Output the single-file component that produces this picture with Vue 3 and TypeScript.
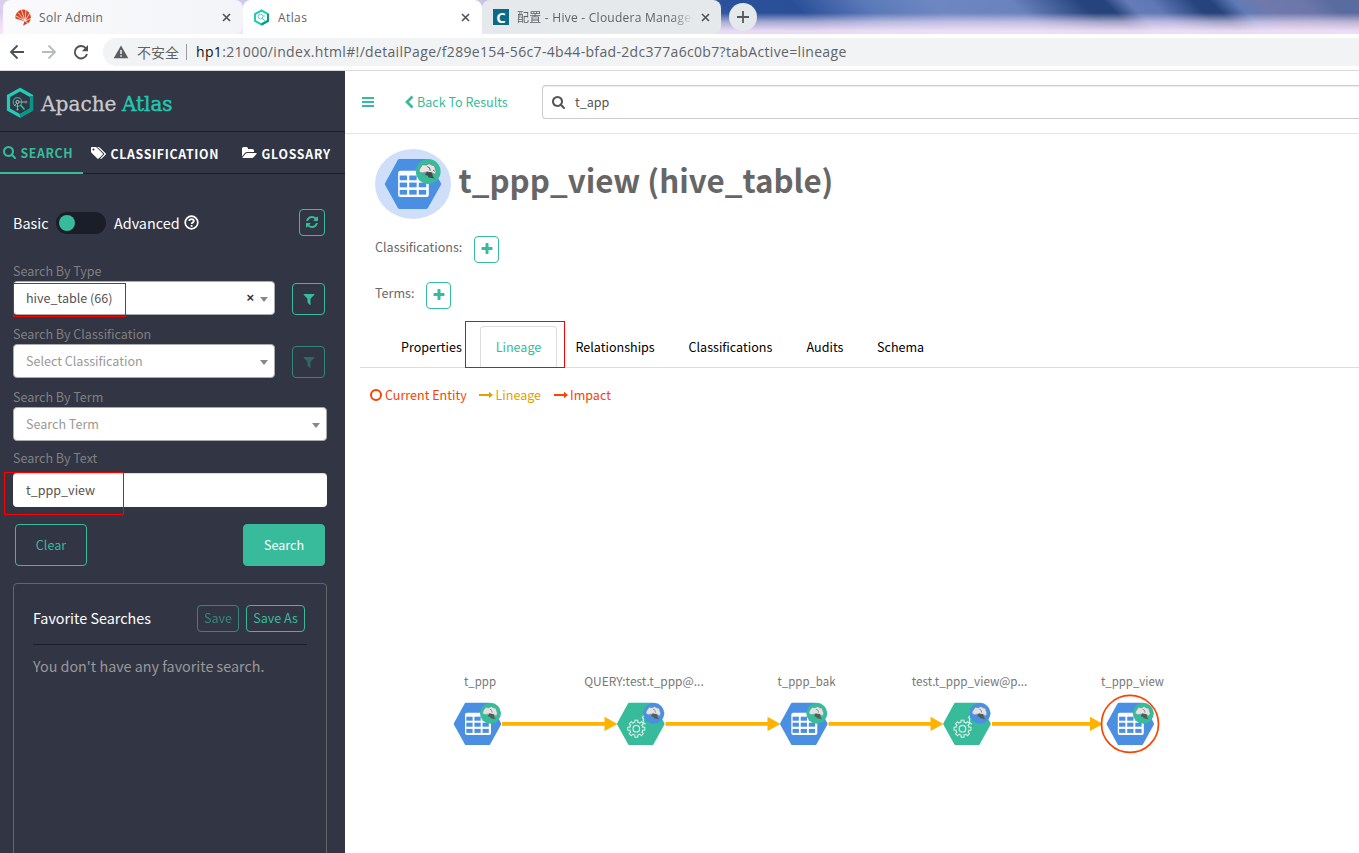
<script setup lang="ts">
interface LineageNode {
  label: string
  kind: 'table' | 'process'
  x: number
  center: number
  width: number
}

const paths = {
  search: 'M1152 832q0-185-131.5-316.5t-316.5-131.5-316.5 131.5-131.5 316.5 131.5 316.5 316.5 131.5 316.5-131.5 131.5-316.5zm512 832q0 52-38 90t-90 38q-54 0-90-38l-343-342q-179 124-399 124-143 0-273.5-55.5t-225-150-150-225-55.5-273.5 55.5-273.5 150-225 225-150 273.5-55.5 273.5 55.5 225 150 150 225 55.5 273.5q0 220-124 399l343 343q37 37 37 90z',
  refresh: 'M1639 1056q0 5-1 7-64 268-268 434.5t-478 166.5q-146 0-282.5-55t-243.5-157l-129 129q-19 19-45 19t-45-19-19-45v-448q0-26 19-45t45-19h448q26 0 45 19t19 45-19 45l-137 137q71 66 161 102t187 36q134 0 250-65t186-179q11-17 53-117 8-23 30-23h192q13 0 22.5 9.5t9.5 22.5zm25-800v448q0 26-19 45t-45 19h-448q-26 0-45-19t-19-45 19-45l138-138q-148-137-349-137-134 0-250 65t-186 179q-11 17-53 117-8 23-30 23h-199q-13 0-22.5-9.5t-9.5-22.5v-7q65-268 270-434.5t480-166.5q146 0 284 55.5t245 156.5l130-129q19-19 45-19t45 19 19 45z',
  filter: 'M1595 295q17 41-14 70l-493 493v742q0 42-39 59-13 5-25 5-27 0-45-19l-256-256q-19-19-19-45v-486l-493-493q-31-29-14-70 17-39 59-39h1280q42 0 59 39z',
  plus: 'M1600 736v192q0 40-28 68t-68 28h-416v416q0 40-28 68t-68 28h-192q-40 0-68-28t-28-68v-416h-416q-40 0-68-28t-28-68v-192q0-40 28-68t68-28h416v-416q0-40 28-68t68-28h192q40 0 68 28t28 68v416h416q40 0 68 28t28 68z',
  tags: 'M384 448q0-53-37.5-90.5t-90.5-37.5-90.5 37.5-37.5 90.5 37.5 90.5 90.5 37.5 90.5-37.5 37.5-90.5zm1067 576q0 53-37 90l-491 492q-39 37-91 37-53 0-90-37l-715-716q-38-37-64.5-101t-26.5-117v-416q0-52 38-90t90-38h416q53 0 117 26.5t102 64.5l715 714q37 39 37 91zm384 0q0 53-37 90l-491 492q-39 37-91 37-36 0-59-14t-53-45l470-470q37-37 37-90 0-52-37-91l-715-714q-38-38-102-64.5t-117-26.5h224q53 0 117 26.5t102 64.5l715 714q37 39 37 91z',
  folder: 'M1879 952q0 31-31 66l-336 396q-43 51-120.5 86.5t-143.5 35.5h-1088q-34 0-60.5-13t-26.5-43q0-31 31-66l336-396q43-51 120.5-86.5t143.5-35.5h1088q34 0 60.5 13t26.5 43zm-343-344v160h-832q-94 0-197 47.5t-164 119.5l-337 396-5 6q0-4-.5-12.5t-.5-12.5v-960q0-92 66-158t158-66h320q92 0 158 66t66 158v32h544q92 0 158 66t66 158z',
}

const nodes: LineageNode[] = [
  { label: 't_ppp', kind: 'table', x: 453.7, center: 480, width: 32 },
  { label: 'QUERY:test.t_ppp@...', kind: 'process', x: 617, center: 644, width: 119.5 },
  { label: 't_ppp_bak', kind: 'table', x: 780, center: 806.5, width: 58 },
  { label: 'test.t_ppp_view@p...', kind: 'process', x: 943.2, center: 969.5, width: 115.5 },
  { label: 't_ppp_view', kind: 'table', x: 1106.5, center: 1132.5, width: 63 },
]

const edges = [
  { from: 502, tip: 617.5 },
  { from: 665.5, tip: 780.5 },
  { from: 828.5, tip: 943.5 },
  { from: 992, tip: 1103 },
]

const rows = [14, 20, 26.2]
const cols = [12.6, 20.7, 28.8]
const teeth = [0, 45, 90, 135, 180, 225, 270, 315]

const entityTabs = [
  { name: 'Properties', cls: 't-prop' },
  { name: 'Lineage', cls: 't-lin' },
  { name: 'Relationships', cls: 't-rel' },
  { name: 'Classifications', cls: 't-cls' },
  { name: 'Audits', cls: 't-aud' },
  { name: 'Schema', cls: 't-sch' },
]
</script>

<template>
  <div class="window">
    <header class="browser">
      <div class="strip">
        <div class="tab tab-solr">
          <svg class="fav" width="17" height="17" viewBox="0 0 17 17">
            <path d="M8 .5a8 8 0 0 1 6 13L8 16.800l1.500-4.500L.5 9.500A8 8 0 0 1 8 .5z" fill="#d9411e" />
            <path d="M10 12 1 7M10 12 3 3.500M10 12 6.500 1M10 12 11 0M10 12 15 3.500M10 12l7-3M10 12l4 3" stroke="#f5f6f8" stroke-width=".8" />
          </svg>
          <span class="tab-text solr-text">Solr Admin</span>
          <svg class="x" width="9" height="9" viewBox="0 0 9 9"><path d="M1 1l7 7M8 1 1 8" /></svg>
        </div>
        <div class="tab tab-atlas">
          <svg class="fav" width="17" height="17" viewBox="0 0 17 17">
            <path d="M8.500 1.500 15 5v7l-6.500 3.500L2 12V5z" fill="none" stroke="#22cdb4" stroke-width="2" />
            <path d="M15 5v7l-6.500 3.500" fill="none" stroke="#089a86" stroke-width="2" />
            <circle cx="7.500" cy="7.500" r="2.300" fill="none" stroke="#5fcfc0" />
            <path d="m9 9 3 3M10 7h2" stroke="#5fcfc0" />
          </svg>
          <span class="tab-text atlas-text">Atlas</span>
          <svg class="x" width="9" height="9" viewBox="0 0 9 9"><path d="M1 1l7 7M8 1 1 8" /></svg>
        </div>
        <div class="tab tab-hive">
          <span class="cfav">C</span>
          <span class="tab-text hive-text">配置 - Hive - Cloudera Manage</span>
          <svg class="x" width="9" height="9" viewBox="0 0 9 9"><path d="M1 1l7 7M8 1 1 8" /></svg>
        </div>
        <div class="newtab">
          <svg width="12" height="12" viewBox="0 0 12 12"><path d="M6 0v12M0 6h12" stroke="#55595d" stroke-width="1.800" /></svg>
        </div>
      </div>
      <div class="toolbar">
        <svg class="nav" width="92" height="36" viewBox="0 0 92 36">
          <g fill="none" stroke-width="1.900">
            <path d="M24 18H11.500M17.500 11.500 11 18l6.500 6.500" stroke="#4e5257" />
            <path d="M42 18h12.500M48.500 11.500 55 18l-6.500 6.500" stroke="#b9bcbf" />
            <path d="M86 14.500A6.200 6.200 0 1 0 87 20" stroke="#4e5257" />
          </g>
          <path d="M88 11v6.200h-6.200z" fill="#4e5257" />
        </svg>
        <div class="address">
          <svg width="16" height="14" viewBox="0 0 16 14">
            <path d="M8 .5 15.300 13.300H.7z" fill="#5b5f64" />
            <path d="M8 5v4M8 10.200v1.600" stroke="#f1f3f4" stroke-width="1.500" />
          </svg>
          <span class="unsafe">不安全</span>
          <span class="sep"></span>
          <span class="url"><b>hp1</b>:21000/index.html#!/detailPage/f289e154-56c7-4b44-bfad-2dc377a6c0b7?tabActive=lineage</span>
        </div>
      </div>
    </header>

    <div class="app">
      <aside class="sidebar">
        <div class="brand">
          <svg width="180" height="60" viewBox="0 0 180 60">
            <path d="M20 19 31.500 25.500v13.500L20 45.500 8.500 39V25.500z" fill="none" stroke="#22cdb4" stroke-width="3.200" transform="translate(0 -.5)" />
            <path d="M31.500 25v13.500L20 45" fill="none" stroke="#079685" stroke-width="3.200" />
            <circle cx="17.500" cy="31" r="4.300" fill="none" stroke="#1fae9b" stroke-width="1.200" />
            <circle cx="17.500" cy="31" r="1.600" fill="none" stroke="#c8cbd0" />
            <path d="m20.500 34 4 4.500" stroke="#1fc4ad" stroke-width="1.600" />
            <path d="M19 31h6M17.500 33v5M14 35l3-3" stroke="#a8abb2" stroke-width=".9" />
            <circle cx="26" cy="31" r="1" fill="none" stroke="#a8abb2" stroke-width=".7" />
            <circle cx="17.500" cy="38.500" r="1" fill="#a8abb2" />
            <text x="41" y="39.500" textLength="75.500" lengthAdjust="spacingAndGlyphs" class="logo-text" fill="#c9c9cc">Apache</text>
            <text x="122" y="39.500" textLength="50.500" lengthAdjust="spacingAndGlyphs" class="logo-text logo-green" fill="#22c7b0">Atlas</text>
          </svg>
        </div>
        <nav class="side-tabs">
          <a class="side-tab active">
            <svg width="14" height="14" viewBox="0 0 1792 1792"><path :d="paths.search" fill="currentColor" /></svg><span class="s1">SEARCH</span>
          </a>
          <a class="side-tab cl">
            <svg width="16" height="14" viewBox="0 0 1920 1792"><path :d="paths.tags" fill="currentColor" /></svg><span class="s2">CLASSIFICATION</span>
          </a>
          <a class="side-tab gl">
            <svg width="15" height="14" viewBox="0 0 1920 1792"><path :d="paths.folder" fill="currentColor" /></svg><span class="s3">GLOSSARY</span>
          </a>
        </nav>

        <div class="form">
          <div class="mode">
            <span class="basic">Basic</span>
            <span class="switch"><i></i></span>
            <span class="advanced">Advanced</span>
            <svg class="help" width="15" height="15" viewBox="0 0 15 15">
              <circle cx="7.500" cy="7.500" r="6.300" fill="none" stroke="#fff" stroke-width="1.700" />
              <path d="M5.300 6.100C5.300 3.300 9.800 3.400 9.800 6c0 1.500-2.200 1.400-2.200 3M7.600 10.100v1.700" fill="none" stroke="#fff" stroke-width="1.800" />
            </svg>
            <span class="icon-btn refresh"><svg width="14" height="14" viewBox="0 0 1792 1792"><path :d="paths.refresh" fill="currentColor" /></svg></span>
          </div>

          <label>Search By Type</label>
          <div class="line">
            <div class="select short"><span class="value">hive_table (66)</span><span class="clear-x">×</span><i class="caret"></i></div>
            <span class="icon-btn filter"><svg width="14" height="14" viewBox="0 0 1792 1792"><path :d="paths.filter" fill="currentColor" /></svg></span>
          </div>
          <label>Search By Classification</label>
          <div class="line">
            <div class="select short"><span>Select Classification</span><i class="caret"></i></div>
            <span class="icon-btn filter off"><svg width="14" height="14" viewBox="0 0 1792 1792"><path :d="paths.filter" fill="currentColor" /></svg></span>
          </div>
          <label>Search By Term</label>
          <div class="line"><div class="select"><span>Search Term</span><i class="caret"></i></div></div>
          <label class="last">Search By Text</label>
          <div class="input"><span>t_ppp_view</span></div>
          <div class="actions">
            <button class="clear">Clear</button>
            <button class="go">Search</button>
          </div>

          <section class="favorites">
            <div class="fav-head">
              <h4>Favorite Searches</h4>
              <button class="save off">Save</button>
              <button class="save as">Save As</button>
            </div>
            <p>You don't have any favorite search.</p>
          </section>
        </div>
        <i class="mark mark-type"></i>
        <i class="mark mark-text"></i>
      </aside>

      <main class="content">
        <div class="topbar">
          <svg class="burger" width="12" height="10" viewBox="0 0 12 10"><path d="M0 1h12M0 5h12M0 9h12" stroke="#37bb9b" stroke-width="2" /></svg>
          <a class="back"><svg width="9" height="14" viewBox="0 0 9 14"><path d="M7.500 1.500 2 7l5.500 5.500" fill="none" stroke="#37bb9b" stroke-width="2.800" /></svg><span>Back To Results</span></a>
          <div class="global">
            <svg width="14" height="14" viewBox="0 0 1792 1792"><path :d="paths.search" fill="#555" /></svg>
            <span>t_app</span>
          </div>
        </div>

        <div class="entity">
          <div class="entity-icon">
            <svg width="76" height="70" viewBox="0 0 76 70">
              <ellipse cx="38" cy="35" rx="38" ry="35" fill="#cfdff9" />
              <g transform="translate(9.800 10) scale(1.180)">
                <path d="M12.300 0h22.900q1 0 1.500.9L47.500 20.300q.5.900 0 1.800L36.500 41.500q-.5.900-1.500.9H12.600q-1 0-1.500-.9L.3 22.100q-.5-.9 0-1.800L11 .9q.4-.9 1.300-.9z" fill="#4a8fe2" />
                <rect x="11.300" y="10" width="26" height="22.300" rx="2" fill="#fff" />
                <template v-for="r in rows" :key="r">
                  <rect v-for="c in cols" :key="c" :x="c" :y="r" width="6.300" height="4" fill="#4a8fe2" />
                </template>
                <circle cx="36.800" cy="10.600" r="10.500" fill="#37bb9b" />
                <path d="M29.500 8.500 32 4.800l3 .4 2.500-1.200 2.500 1.400 2 .4 1.500 5-1 2.200-3-1.500-2 1-3-1.300-3 .6-2.500-1z" fill="#e6e6e6" stroke="#777" stroke-width=".5" />
                <path d="m35.500 10.500 4.500 1 .8 3.500 1.800 1.600-5.400-1-1-1.600-2-.5z" fill="#454b48" />
                <path d="m36 6.500 2 1 .5 2.500M41 9.500l1.500 1" fill="none" stroke="#555" stroke-width=".8" />
              </g>
            </svg>
          </div>
          <h1>t_ppp_view (hive_table)</h1>
        </div>
        <div class="meta"><span>Classifications:</span><i class="add"><svg width="14" height="14" viewBox="0 0 1792 1792"><path :d="paths.plus" fill="currentColor" /></svg></i></div>
        <div class="meta"><span>Terms:</span><i class="add"><svg width="14" height="14" viewBox="0 0 1792 1792"><path :d="paths.plus" fill="currentColor" /></svg></i></div>

        <nav class="entity-tabs">
          <a v-for="t in entityTabs" :key="t.name" :class="t.cls">{{ t.name }}</a>
        </nav>
        <i class="mark mark-lineage"></i>

        <div class="legend">
          <span class="cur"><i class="ring"></i>Current Entity</span>
          <span class="lin"><svg width="14" height="8" viewBox="0 0 14 8"><path d="M0 4h11" stroke="currentColor" stroke-width="2" /><path d="m10 .8 4 3.200-4 3.200z" fill="currentColor" /></svg>Lineage</span>
          <span class="imp"><svg width="14" height="8" viewBox="0 0 14 8"><path d="M0 4h11" stroke="currentColor" stroke-width="2" /><path d="m10 .8 4 3.200-4 3.200z" fill="currentColor" /></svg>Impact</span>
        </div>

        <svg class="graph" width="1014" height="440" viewBox="345 413 1014 440">
          <g v-for="e in edges" :key="e.from" fill="#ffb300">
            <rect :x="e.from" y="722" :width="e.tip - 12 - e.from" height="3.800" />
            <path :d="`M${e.tip - 13} 716.800v14.200L${e.tip} 723.900z`" />
          </g>
          <g v-for="n in nodes" :key="n.label">
            <text :x="n.center - n.width / 2" y="686.200" :textLength="n.width" lengthAdjust="spacingAndGlyphs">{{ n.label }}</text>
            <g :transform="`translate(${n.x} 702.700)`">
              <path d="M12.300 0h22.900q1 0 1.500.9L47.300 20.300q.5.900 0 1.800L36.500 41.500q-.5.900-1.500.9H12.600q-1 0-1.500-.9L.3 22.100q-.5-.9 0-1.800L11 .9q.4-.9 1.300-.9z" :fill="n.kind === 'table' ? '#4a8fe2' : '#37bb9b'" />
              <template v-if="n.kind === 'table'">
                <rect x="11.300" y="10" width="26" height="22.300" rx="2" fill="#fff" />
                <template v-for="r in rows" :key="r">
                  <rect v-for="c in cols" :key="c" :x="c" :y="r" width="6.300" height="4" fill="#4a8fe2" />
                </template>
              </template>
              <g v-else fill="none" stroke="#d5f0e8" stroke-width="1.200">
                <circle cx="19.300" cy="26" r="3.300" />
                <circle cx="19.300" cy="26" r="6.700" />
                <g stroke-width="4">
                  <path v-for="a in teeth" :key="a" d="M19.300 19.300v-2.300" :transform="`rotate(${a} 19.300 26)`" />
                </g>
                <g stroke-width="1.800" stroke="#37bb9b">
                  <path v-for="a in teeth" :key="a" d="M19.300 20.300v-2.300" :transform="`rotate(${a} 19.300 26)`" />
                </g>
                <path d="m28.500 21.500-2.500-2 .6-3-1.200-1.800 2-2" />
              </g>
              <circle cx="36.800" cy="10.600" r="10.500" :fill="n.kind === 'table' ? '#37bb9b' : '#4a8fe2'" />
              <path d="M29.500 8.500 32 4.800l3 .4 2.500-1.200 2.500 1.400 2 .4 1.500 5-1 2.200-3-1.500-2 1-3-1.300-3 .6-2.500-1z" fill="#e2e2e2" stroke="#999" stroke-width=".4" />
              <path d="m35.500 10.500 4.500 1 .8 3.500 1.400 1.600-5-1-1-1.600-2-.5z" fill="#555b58" />
              <path d="m36 6.500 2 1 .5 2.500" fill="none" stroke="#777" stroke-width=".7" />
            </g>
          </g>
          <circle cx="1130" cy="723.900" r="28.500" fill="none" stroke="#fb4200" stroke-width="1.700" />
        </svg>
      </main>
    </div>
  </div>
</template>

<style>
body { margin: 0; overflow: hidden; background: #fff; }
</style>

<style scoped>
* { box-sizing: border-box; }
.window { width: 1359px; height: 853px; overflow: hidden; font-family: "Noto Sans CJK SC", "Noto Sans", sans-serif; font-size: 12.55px; background: #fff; }
i { font-style: normal; }
svg { display: block; flex: none; }
h1, h4, p { margin: 0; }
button { font: inherit; padding: 0 0 2px; margin: 0; }

.browser { height: 71px; border-bottom: 1px solid #d8d9da; font-family: "Open Sans", "Noto Sans CJK SC", sans-serif; }
.strip { height: 34px; display: flex; padding-left: 3px;
  background:
    linear-gradient(to bottom, rgba(248,229,250,0) 13px, rgba(248,229,250,.6) 22px, rgba(248,229,250,.93) 31px),
    linear-gradient(45deg, #d9d0ee 0, #c9c3ea 365px, #2c519c 533px, #2a4f98 582px, #5a78b8 632px, #6e87c2 682px, #6a83be 738px, #27437d 787px, #27437d 804px, #637cb7 820px, #6079b6 837px, #27437d 867px, #27437d 879px, #617bb7 896px, #7079ac 915px, #6c76aa 943px, #5a6b9f 964px, #5a6ba0 985px); }
.tab { width: 239px; height: 34px; display: flex; align-items: center; padding: 0 11px 0 12px; border-radius: 8px 8px 0 0; }
.tab-solr { background: linear-gradient(to right, #fafafc, #f2f4f7); border-radius: 8px 8px 8px 0; width: 240px; padding-right: 12px; }
.tab-atlas { background: #fff; padding-left: 10px; padding-right: 12px; }
.tab-hive { background: #e6e9eb; border-radius: 8px; padding-left: 11px; }
.tab-text { flex: 1; margin-left: 7px; padding-top: 1px; font-size: 12px; line-height: 34px; color: #5f6368; white-space: nowrap; overflow: hidden; }
.solr-text { letter-spacing: .3px; }
.atlas-text { letter-spacing: .4px; margin-left: 8px; }
.hive-text { letter-spacing: .25px; margin-left: 8px; -webkit-mask-image: linear-gradient(to right, #000 88%, transparent 100%); mask-image: linear-gradient(to right, #000 88%, transparent 100%); margin-right: 8px; }
.x path { fill: none; stroke: #4e5257; stroke-width: 1.600; }
.cfav { width: 16px; height: 16px; background: #0b6a88; color: #fff; font: bold 15px/16px "Open Sans", sans-serif; text-align: center; }
.newtab { width: 28px; height: 28px; margin: 3px 0 0 8px; border-radius: 50%; background: #e6e9ec; display: flex; align-items: center; justify-content: center; }
.toolbar { height: 36px; display: flex; align-items: center; background: #fff; }
.nav { margin-right: 11px; }
.address { flex: 1; height: 28px; border-radius: 14px 0 0 14px; background: #f1f3f4; display: flex; align-items: center; padding-left: 10px; color: #5f6368; }
.unsafe { font-size: 14px; line-height: 28px; margin-left: 8px; font-family: "Noto Sans CJK SC", sans-serif; }
.sep { width: 1px; height: 16px; background: #9a9da1; margin: 0 9px 0 7px; }
.url { font-size: 14px; line-height: 28px; white-space: nowrap; color: #5f6368; letter-spacing: .33px; }
.url b { font-weight: 400; color: #111; }

.app { display: flex; height: 782px; }
.sidebar { position: relative; width: 345px; background: #323544; color: #fff; overflow: hidden; }
.brand { height: 61px; border-bottom: 1px solid #1b1d29; }
.logo-text { font-family: "DejaVu Serif", serif; font-size: 20px; stroke: #c9c9cc; stroke-width: .3px; }
.logo-green { stroke: #22c7b0; stroke-width: .5px; }
.side-tabs { height: 42px; display: flex; border-bottom: 1px solid #1b1d29; font-weight: 700; font-size: 12.300px; }
.side-tab { height: 42px; display: flex; align-items: center; padding-bottom: 1px; white-space: nowrap; letter-spacing: .7px; line-height: 40px; }
.side-tab.active { width: 83px; padding-left: 3px; color: #37bb9b; border-bottom: 2px solid #37bb9b; padding-bottom: 0; letter-spacing: .65px; }
.side-tab.cl { margin-left: 8px; width: 151px; }
.side-tab.gl { letter-spacing: .75px; }
.side-tab span { margin-left: 3.500px; padding-top: 2px; }
.side-tab .s3 { margin-left: 4.500px; }
.form { padding: 35px 18px 0 13px; }
.mode { height: 27px; display: flex; align-items: center; font-size: 14.400px; line-height: 27px; }
.basic { width: 43px; }
.switch { width: 50px; height: 22px; border-radius: 11px; background: #1b1e28; padding: 3px; }
.switch i { display: block; width: 16px; height: 16px; border-radius: 50%; background: #37bb9b; }
.advanced { margin-left: 8px; width: 70px; }
.icon-btn { display: flex; align-items: center; justify-content: center; color: #37bb9b; border: 1px solid #37bb9b; border-radius: 4px; }
.refresh { width: 26px; height: 27px; margin-left: 100px; padding-bottom: 1px; }
label { display: block; height: 20px; line-height: 20px; color: #808080; margin-top: 25px; }
.line + label { margin-top: 9px; }
.line + label.last { margin-top: 7px; height: 25px; }
.line { height: 34px; display: flex; }
.select { flex: 1; height: 34px; background: #fff; border: 1px solid #aaa; border-radius: 4px; display: flex; align-items: center; padding: 0 6px 0 12px; color: #999; }
.select.short { flex: none; width: 262px; }
.select span:first-child { flex: 1; line-height: 32px; }
.select .value { color: #555; }
.select .clear-x { color: #333; font: bold 13px/30px "Liberation Sans", sans-serif; margin-right: 6px; }
.caret { width: 0; height: 0; border: 4px solid transparent; border-top: 5px solid #888; border-bottom: 0; margin-top: 2px; }
.filter { width: 33px; height: 32px; margin: 2px 0 0 17px; }
.off { opacity: .6; }
.filter.off svg { opacity: .6; }
.input { height: 34px; border-radius: 4px; background: #fff; color: #555; padding-left: 13px; line-height: 34px; box-shadow: inset 0 1px 1px rgba(0,0,0,.15); }
.actions { display: flex; justify-content: space-between; padding: 17px 2px; height: 76px; }
.clear, .go { height: 42px; border: 1px solid #37bb9b; border-radius: 4px; background: transparent; color: #37bb9b; width: 72px; }
.go { width: 82px; background: #37bb9b; color: #fff; }
.favorites { height: 300px; border: 1px solid #666; border-radius: 4px; padding: 21px 19px; }
.fav-head { display: flex; height: 40px; border-bottom: 1px solid #1b1d29; }
h4 { flex: 1; font-size: 14.350px; font-weight: 400; line-height: 26px; }
.save { width: 42px; height: 27px; border: 1px solid #37bb9b; border-radius: 4px; background: transparent; color: #37bb9b; margin-right: 7px; }
.save.as { width: 59px; margin-right: 2px; }
.favorites p { font-size: 14.330px; line-height: 42px; color: #999; white-space: nowrap; }

.mark { position: absolute; border: 1px solid #f00; }
.mark-type { left: 13px; top: 212px; width: 113px; height: 34px; }
.mark-text { left: 4px; top: 401px; width: 120px; height: 43px; }
.mark-lineage { left: 120px; top: 250px; width: 100px; height: 47px; }

.content { position: relative; flex: 1; color: #686868; }
.topbar { height: 63px; border-bottom: 1px solid #e3e5e6; display: flex; align-items: center; padding-left: 17px; }
.back { display: flex; align-items: center; margin-left: 31px; color: #37bb9b; width: 137px; }
.back svg { margin-top: -1px; }
.back span { margin-left: 3px; padding-bottom: 2px; }
.global { flex: 1; height: 34px; border: 1px solid #ccc; border-right: 0; border-radius: 4px 0 0 4px; display: flex; align-items: center; padding-left: 9px; color: #555; box-shadow: inset 0 1px 1px rgba(0,0,0,.07); }
.global span { margin-left: 9px; padding-bottom: 2px; }
.entity { display: flex; padding: 15px 0 0 30px; height: 98px; }
h1 { font-size: 31.300px; font-weight: 700; line-height: 62px; margin-left: 7.500px; color: #666; white-space: nowrap; }
.meta { display: flex; padding: 4px 0 0 30px; height: 46px; line-height: 28px; }
.meta span { margin-right: 12px; margin-top: -3px; }
.add { width: 25px; height: 27px; border: 1px solid #37bb9b; border-radius: 4px; color: #37bb9b; display: flex; align-items: center; justify-content: center; padding-bottom: 1px; }
.entity-tabs { height: 43px; margin-left: 15px; border-bottom: 1px solid #ddd; display: flex; align-items: flex-end; color: #000; line-height: 42px; margin-top: 1px; padding: 0 0 0 41px; }
.entity-tabs a { height: 41px; white-space: nowrap; }
.t-prop { width: 79px; }
.entity-tabs .t-lin { width: 77px; height: 41px; border: 1px solid #ddd; border-bottom: 0; border-radius: 4px 4px 0 0; color: #37bb9b; text-align: center; line-height: 40px; }
.t-rel { width: 131px; padding-left: 18.500px; }
.t-cls { width: 118px; padding-left: .5px; }
.t-aud { width: 71px; padding-left: .5px; }
.legend { display: flex; align-items: flex-start; padding: 17px 0 0 25px; height: 45px; line-height: 20px; }
.legend span { display: flex; align-items: center; white-space: nowrap; }
.cur { color: #fb4200; width: 109px; }
.ring { width: 12px; height: 12px; border: 2px solid #fb4200; border-radius: 50%; margin-right: 3px; }
.lin { color: #e0a000; width: 75px; }
.imp { color: #fb4200; }
.legend svg { margin-right: 2px; }
.legend .lin svg { margin-right: 2.500px; }
.graph text { font-family: "Noto Sans CJK SC", sans-serif; font-size: 12px; fill: #777; }
</style>
